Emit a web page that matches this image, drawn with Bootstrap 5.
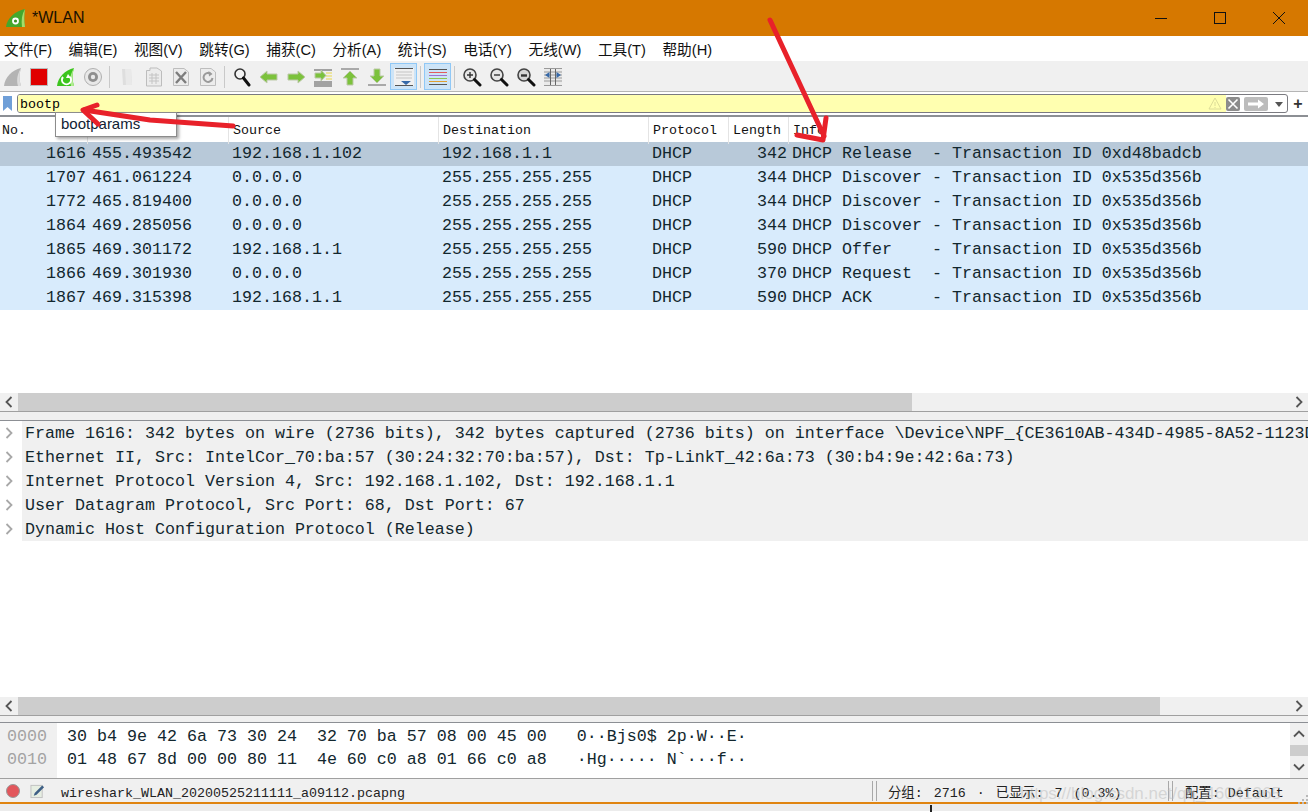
<!DOCTYPE html>
<html lang="zh-CN">
<head>
  <meta charset="UTF-8" />
  <meta name="viewport" content="width=device-width, initial-scale=1.0" />
  <title>*WLAN</title>
  <link href="https://cdn.jsdelivr.net/npm/bootstrap@5.3.3/dist/css/bootstrap.min.css" rel="stylesheet">
  <style>
    body {
      background-color: #fff;
      color: #000;
      height: 812px;
      overflow: hidden;
      font-family: "Liberation Sans", "Noto Sans CJK SC", sans-serif;
    }
    .mono { font-family: "Liberation Mono", "Noto Sans CJK SC", monospace; }
    .titlebar { height: 36px; background-color: #d67800; padding-left: 5px; font-size: 16px; color: #1a1000; }
    .titlebar .win-btns { margin-left: auto; }
    .title-icon { margin-right: 6px; }
    .win-btn { width: 59px; height: 24px; display: flex; align-items: center; justify-content: center; }
    .menubar { height: 26px; padding: 2px 0 0 4px; gap: 16.5px; font-size: 14.67px; color: #111; border-bottom: 1px solid #f0f0f0; }
    .toolstrip { height: 30px; background-color: #f0f0f0; border-bottom: 1px solid #b5b5b5; }
    .tool-btn { width: 27px; height: 27px; display: flex; align-items: center; justify-content: center; flex: none; }
    .tool-btn.first { width: 25px; }
    .tool-btn.on { background-color: #cde4f7; border: 1px solid #90c8f6; }
    .tool-sep { width: 7px; height: 22px; flex: none; position: relative; }
    .tool-sep::after { content: ""; position: absolute; left: 3px; top: 0; bottom: 0; width: 1px; background-color: #c9c9c9; }
    .filterbar { height: 25px; border-bottom: 2px solid #8c8f94; padding: 2px 0 2px 0; }
    .bookmark-box { width: 17px; padding-left: 3px; }
    .filter-input { width: 1271px; height: 19px; border: 1px solid #7a7a80; border-radius: 3px; background-color: #fff; overflow: hidden; }
    .filter-text { background-color: #ffffb0; flex-grow: 1; height: 100%; padding-left: 2px; font-size: 13.33px; line-height: 19px; }
    .filter-add { width: 20px; text-align: center; font-size: 16px; font-weight: 700; line-height: 18px; color: #333; }
    .col-grid { display: grid; grid-template-columns: 88px 141px 210px 210px 80px 60px 1fr; }
    .pkt-head { height: 25px; font-size: 13.33px; line-height: 27px; color: #111; }
    .pkt-head > div { padding-left: 4px; border-right: 1px solid #e4e4e4; }
    .pkt-head > div:first-child { padding-left: 2px; }
    .pkt-list { height: 251px; }
    .pkt-row { height: 24px; font-size: 16.67px; line-height: 23px; background-color: #d8ebfc; color: #12272e; white-space: pre; }
    .pkt-row.sel { background-color: #b8c9d9; }
    .pkt-row > div { padding-left: 3px; }
    .pkt-row > .r { text-align: right; padding-left: 0; padding-right: 2px; }
    .pkt-row > .t { padding-left: 4px; }
    .pkt-row > .info { padding-left: 3px; }
    .hbar { height: 19px; background-color: #f0f0f0; border-bottom: 1px solid #a0a0a0; }
    .hbar-end { width: 18px; flex: none; display: flex; align-items: center; justify-content: center; }
    .hbar-thumb { background-color: #cdcdcd; height: 100%; }
    .thumb-a { width: 894px; }
    .thumb-b { width: 1142px; }
    .splitter { background-color: #f0f0f0; border-bottom: 1px solid #8c8f94; }
    .split-a { height: 9px; }
    .split-b { height: 7px; }
    .detail-pane { height: 276px; font-size: 16.67px; }
    .detail-row { height: 24px; line-height: 26px; white-space: pre; overflow: hidden; }
    .detail-arrow { width: 22px; flex: none; display: flex; align-items: center; padding-left: 5px; }
    .detail-text { background-color: #f0f0f0; flex-grow: 1; padding-left: 3px; color: #12272e; }
    .hex-pane { height: 55px; font-size: 16.67px; line-height: 23px; }
    .hex-gutter { width: 57px; background-color: #f0f0f0; color: #a3a3a3; padding: 2px 0 0 7px; flex: none; }
    .hex-body { padding: 2px 0 0 10px; white-space: pre; color: #12272e; flex-grow: 1; }
    .vbar { width: 18px; background-color: #f0f0f0; flex: none; }
    .vbar-end { height: 22px; display: flex; align-items: center; justify-content: center; }
    .vbar-thumb { height: 11px; background-color: #cdcdcd; }
    .statusbar { height: 26px; background-color: #f0f0f0; border-top: 1px solid #a0a0a0; border-bottom: 2px solid #e08410; font-size: 13.33px; color: #222; position: relative; }
    .status-rec { margin-left: 6px; margin-right: 10px; flex: none; }
    .status-note { margin-right: 16px; flex: none; }
    .status-file { width: 811px; padding-top: 7px; }
    .status-grip { width: 5px; height: 20px; border-left: 1px solid #a8a8a8; border-right: 1px solid #a8a8a8; flex: none; }
    .status-grip-a { margin-right: 11px; }
    .status-count { width: 280px; padding-top: 7px; white-space: nowrap; word-spacing: 3px; }
    .status-grip-b { margin-right: 12px; }
    .status-profile { padding-top: 7px; }
    .under-strip { height: 7px; background-color: #ececec; }
    .popup-tip { position: absolute; left: 55px; top: 112px; width: 122px; height: 25px; background-color: #fff; border: 1px solid #8c8c8c; box-shadow: 2px 2px 3px rgba(0,0,0,.35); font-size: 15px; line-height: 22px; padding-left: 5px; color: #123; }
    .draw-over { position: absolute; left: 0; top: 0; pointer-events: none; }
    .watermark { position: absolute; left: 1020px; top: 781px; font-size: 17px; color: rgba(190,190,190,.55); white-space: nowrap; width: 288px; overflow: hidden; }
    .resize-tick { position: absolute; left: 930px; top: 805px; width: 2px; height: 7px; background-color: #222; }
    .size-grip { position: absolute; left: 1298px; top: 794px; }
  </style>
</head>
<body>

<!-- title bar -->
<div class="titlebar d-flex align-items-center">
  <svg width="21" height="20" viewBox="0 0 21 20" class="title-icon"><path d="M1 19C2 10 10 3 20 1C19 7 19 13 20 19Z" fill="#45a82c"/><path d="M20 1C19 7 19 13 20 19L17 19C16 12 17 6 20 1Z" fill="#a4dc6a"/><circle cx="10.500" cy="13" r="3.400" fill="#fff"/><circle cx="10.500" cy="13" r="1.600" fill="#3c8f26"/></svg>
  <span>*WLAN</span>
  <div class="win-btns d-flex align-items-center">
    <div class="win-btn"><svg width="12" height="12"><path d="M0 6.500H12" stroke="#111"/></svg></div>
    <div class="win-btn"><svg width="12" height="12"><rect x=".5" y=".5" width="11" height="11" fill="none" stroke="#111"/></svg></div>
    <div class="win-btn"><svg width="12" height="12"><path d="M0 0L12 12M12 0L0 12" stroke="#111"/></svg></div>
  </div>
</div>

<!-- menu -->
<div class="menubar d-flex align-items-center">
  <span>文件(F)</span><span>编辑(E)</span><span>视图(V)</span><span>跳转(G)</span><span>捕获(C)</span><span>分析(A)</span><span>统计(S)</span><span>电话(Y)</span><span>无线(W)</span><span>工具(T)</span><span>帮助(H)</span>
</div>

<!-- main toolbar -->
<div class="toolstrip d-flex align-items-center">
  <div class="tool-btn first"><svg width="20" height="20" viewBox="0 0 20 20"><path d="M1 19C2 10 9 3 18 1C16 7 16 13 18 19Z" fill="#b4b4b4"/><path d="M18 1C16 7 16 13 18 19L15 19C13 12 15 6 18 1Z" fill="#dcdcdc"/></svg></div>
  <div class="tool-btn"><svg width="18" height="18"><rect x=".5" y=".5" width="17" height="17" fill="#e00000" stroke="#bbb"/></svg></div>
  <div class="tool-btn"><svg width="20" height="20" viewBox="0 0 20 20"><path d="M1 19C2 10 9 3 18 1C16 7 16 13 18 19Z" fill="#3cc41e"/><path d="M18 1C16 7 16 13 18 19L15 19C13 12 15 6 18 1Z" fill="#b0ec90"/><path d="M7 10A4.500 4.500 0 1 0 14 10" fill="none" stroke="#fff" stroke-width="2"/><path d="M12 7L15 11L10 11Z" fill="#fff"/></svg></div>
  <div class="tool-btn"><svg width="20" height="20" viewBox="0 0 20 20"><circle cx="10" cy="10" r="8.500" fill="#e8e8e8" stroke="#b0b0b0"/><circle cx="10" cy="10" r="5" fill="#8f8f8f"/><circle cx="10" cy="10" r="2.200" fill="#e8e8e8"/></svg></div>
  <div class="tool-sep"></div>
  <div class="tool-btn"><svg width="12" height="18" viewBox="0 0 12 18"><path d="M1 1H10L11 17H2Z" fill="#dedede"/><path d="M4 1H10L11 17H5Z" fill="#e9e9e9"/></svg></div>
  <div class="tool-btn"><svg width="18" height="20" viewBox="0 0 18 20"><path d="M1.500 3.500H5V1H12L16.500 4V19H1.500Z" fill="#ececec" stroke="#bdbdbd"/><path d="M4 8H14M4 11H14M4 14H14M7 6V17M11 6V17" stroke="#c4c4c4"/></svg></div>
  <div class="tool-btn"><svg width="18" height="20" viewBox="0 0 18 20"><path d="M1.500 1.500H12L16.500 5V18.500H1.500Z" fill="#ececec" stroke="#bdbdbd"/><path d="M4 5L14 16M14 5L4 16" stroke="#7d7d7d" stroke-width="2.400"/></svg></div>
  <div class="tool-btn"><svg width="18" height="20" viewBox="0 0 18 20"><path d="M1.500 1.500H12L16.500 5V18.500H1.500Z" fill="#ececec" stroke="#bdbdbd"/><path d="M12 7A4.500 4.500 0 1 0 13.500 11" fill="none" stroke="#9a9a9a" stroke-width="2"/><path d="M9.500 4L13.500 7L10 9.500Z" fill="#9a9a9a"/></svg></div>
  <div class="tool-sep"></div>
  <div class="tool-btn"><svg width="18" height="20" viewBox="0 0 18 20"><circle cx="7" cy="7" r="5" fill="#f4f4f4" stroke="#333" stroke-width="1.600"/><path d="M10.500 11L16 18" stroke="#111" stroke-width="3" stroke-linecap="round"/></svg></div>
  <div class="tool-btn"><svg width="20" height="14" viewBox="0 0 20 14"><path d="M1 7L8 1V4H18V10H8V13Z" fill="#7cc23c" stroke="#bcc9a8"/></svg></div>
  <div class="tool-btn"><svg width="20" height="14" viewBox="0 0 20 14"><path d="M19 7L12 1V4H2V10H12V13Z" fill="#7cc23c" stroke="#bcc9a8"/></svg></div>
  <div class="tool-btn"><svg width="20" height="20" viewBox="0 0 20 20"><path d="M1 3H19M1 15H19M1 17H19M1 19H19" stroke="#555"/><path d="M13 6H19M13 9H19M13 12H19" stroke="#e8d84c"/><path d="M2 6H8V3L13 8.500L8 14V11H2Z" fill="#7cc23c" stroke="#bcc9a8"/></svg></div>
  <div class="tool-btn"><svg width="20" height="20" viewBox="0 0 20 20"><path d="M1 2H19" stroke="#a9a9a9" stroke-width="2"/><path d="M10 4L17 11H13V18H7V11H3Z" fill="#7cc23c" stroke="#bcc9a8"/></svg></div>
  <div class="tool-btn"><svg width="20" height="20" viewBox="0 0 20 20"><path d="M1 18H19" stroke="#a9a9a9" stroke-width="2"/><path d="M10 16L17 9H13V2H7V9H3Z" fill="#7cc23c" stroke="#bcc9a8"/></svg></div>
  <div class="tool-btn on"><svg width="20" height="20" viewBox="0 0 20 20"><rect y="1" width="20" height="18" fill="#f0f0f0"/><path d="M1 1.500H19M1 18.500H19" stroke="#555"/><path d="M2 5H18M2 8H18M2 11H18" stroke="#c4c4c4"/><path d="M7 14H17L12 18Z" fill="#3769a8"/></svg></div>
  <div class="tool-sep"></div>
  <div class="tool-btn on"><svg width="20" height="20" viewBox="0 0 20 20"><path d="M1 2.500H19" stroke="#555"/><path d="M1 5.500H19" stroke="#e25d5d"/><path d="M1 8.500H19" stroke="#a071d0"/><path d="M1 11.500H19" stroke="#8ac750"/><path d="M1 14.500H19" stroke="#e0a030"/><path d="M1 17.500H19" stroke="#555"/></svg></div>
  <div class="tool-sep"></div>
  <div class="tool-btn"><svg width="20" height="20" viewBox="0 0 20 20"><circle cx="8" cy="8" r="6" fill="#e6e6e6" stroke="#444" stroke-width="1.600"/><path d="M5 8H11M8 5V11" stroke="#333" stroke-width="1.400"/><path d="M12.500 12.500L18 18" stroke="#111" stroke-width="3" stroke-linecap="round"/></svg></div>
  <div class="tool-btn"><svg width="20" height="20" viewBox="0 0 20 20"><circle cx="8" cy="8" r="6" fill="#e6e6e6" stroke="#444" stroke-width="1.600"/><path d="M5 8H11" stroke="#333" stroke-width="1.400"/><path d="M12.500 12.500L18 18" stroke="#111" stroke-width="3" stroke-linecap="round"/></svg></div>
  <div class="tool-btn"><svg width="20" height="20" viewBox="0 0 20 20"><circle cx="8" cy="8" r="6" fill="#d6d6d6" stroke="#444" stroke-width="1.600"/><path d="M5 8.500H11" stroke="#333" stroke-width="2.400"/><path d="M12.500 12.500L18 18" stroke="#111" stroke-width="3" stroke-linecap="round"/></svg></div>
  <div class="tool-btn"><svg width="20" height="20" viewBox="0 0 20 20"><rect x="1" y="2" width="18" height="16" fill="#eaeaea"/><path d="M1 1.500H19M1 5H19M1 18.500H19M1 8H19M1 11H19M1 14H19" stroke="#9a9a9a"/><path d="M7.500 2V18M12.500 2V18" stroke="#666"/><path d="M2 8L6.500 5V11ZM18 8L13.500 5V11Z" fill="#3769a8"/></svg></div>
</div>

<!-- display filter -->
<div class="filterbar d-flex align-items-center">
  <div class="bookmark-box d-flex"><svg width="9" height="15"><path d="M0 0H9V15L4.500 11L0 15Z" fill="#6f9fd8"/></svg></div>
  <div class="filter-input d-flex align-items-center">
    <div class="filter-text mono d-flex justify-content-between">
      <span>bootp</span>
      <svg width="14" height="13" viewBox="0 0 14 13" class="align-self-center me-1"><path d="M7 1L13 12H1Z" fill="none" stroke="#dcdc98"/><path d="M7 5V9M7 10V11" stroke="#dcdc98"/></svg>
    </div>
    <svg width="14" height="14" viewBox="0 0 14 14"><rect width="14" height="14" rx="2" fill="#8c8c8c"/><path d="M2.500 2.500L11.500 11.500M11.500 2.500L2.500 11.500" stroke="#fff" stroke-width="1.600"/></svg>
    <svg width="24" height="14" viewBox="0 0 24 14" class="ms-1"><rect width="24" height="14" rx="2" fill="#bcbcbc"/><path d="M4 5.500H14V2.500L20 7L14 11.500V8.500H4Z" fill="#fff"/></svg>
    <svg width="19" height="14" viewBox="0 0 19 14"><path d="M7 5H15L11 10Z" fill="#555"/></svg>
  </div>
  <div class="filter-add">+</div>
</div>

<!-- packet list -->
<div class="pkt-head col-grid mono">
  <div>No.</div><div>&nbsp;</div><div>Source</div><div>Destination</div><div>Protocol</div><div>Length</div><div class="border-0">Info</div>
</div>
<div class="pkt-list mono">
  <div class="pkt-row sel col-grid"><div class="r">1616</div><div class="t">455.493542</div><div>192.168.1.102</div><div>192.168.1.1</div><div>DHCP</div><div class="r">342</div><div class="info">DHCP Release  - Transaction ID 0xd48badcb</div></div>
  <div class="pkt-row col-grid"><div class="r">1707</div><div class="t">461.061224</div><div>0.0.0.0</div><div>255.255.255.255</div><div>DHCP</div><div class="r">344</div><div class="info">DHCP Discover - Transaction ID 0x535d356b</div></div>
  <div class="pkt-row col-grid"><div class="r">1772</div><div class="t">465.819400</div><div>0.0.0.0</div><div>255.255.255.255</div><div>DHCP</div><div class="r">344</div><div class="info">DHCP Discover - Transaction ID 0x535d356b</div></div>
  <div class="pkt-row col-grid"><div class="r">1864</div><div class="t">469.285056</div><div>0.0.0.0</div><div>255.255.255.255</div><div>DHCP</div><div class="r">344</div><div class="info">DHCP Discover - Transaction ID 0x535d356b</div></div>
  <div class="pkt-row col-grid"><div class="r">1865</div><div class="t">469.301172</div><div>192.168.1.1</div><div>255.255.255.255</div><div>DHCP</div><div class="r">590</div><div class="info">DHCP Offer    - Transaction ID 0x535d356b</div></div>
  <div class="pkt-row col-grid"><div class="r">1866</div><div class="t">469.301930</div><div>0.0.0.0</div><div>255.255.255.255</div><div>DHCP</div><div class="r">370</div><div class="info">DHCP Request  - Transaction ID 0x535d356b</div></div>
  <div class="pkt-row col-grid"><div class="r">1867</div><div class="t">469.315398</div><div>192.168.1.1</div><div>255.255.255.255</div><div>DHCP</div><div class="r">590</div><div class="info">DHCP ACK      - Transaction ID 0x535d356b</div></div>
</div>
<div class="hbar d-flex">
  <div class="hbar-end"><svg width="8" height="12"><path d="M6.500 1L1.500 6L6.500 11" fill="none" stroke="#555" stroke-width="1.800"/></svg></div>
  <div class="hbar-thumb thumb-a"></div>
  <div class="hbar-end ms-auto"><svg width="8" height="12"><path d="M1.500 1L6.500 6L1.500 11" fill="none" stroke="#555" stroke-width="1.800"/></svg></div>
</div>
<div class="splitter split-a"></div>

<!-- packet details -->
<div class="detail-pane mono">
  <div class="detail-row d-flex"><div class="detail-arrow"><svg width="8" height="12"><path d="M1.500 1L6.500 6L1.500 11" fill="none" stroke="#a8a8a8" stroke-width="1.800"/></svg></div><div class="detail-text">Frame 1616: 342 bytes on wire (2736 bits), 342 bytes captured (2736 bits) on interface \Device\NPF_{CE3610AB-434D-4985-8A52-1123D</div></div>
  <div class="detail-row d-flex"><div class="detail-arrow"><svg width="8" height="12"><path d="M1.500 1L6.500 6L1.500 11" fill="none" stroke="#a8a8a8" stroke-width="1.800"/></svg></div><div class="detail-text">Ethernet II, Src: IntelCor_70:ba:57 (30:24:32:70:ba:57), Dst: Tp-LinkT_42:6a:73 (30:b4:9e:42:6a:73)</div></div>
  <div class="detail-row d-flex"><div class="detail-arrow"><svg width="8" height="12"><path d="M1.500 1L6.500 6L1.500 11" fill="none" stroke="#a8a8a8" stroke-width="1.800"/></svg></div><div class="detail-text">Internet Protocol Version 4, Src: 192.168.1.102, Dst: 192.168.1.1</div></div>
  <div class="detail-row d-flex"><div class="detail-arrow"><svg width="8" height="12"><path d="M1.500 1L6.500 6L1.500 11" fill="none" stroke="#a8a8a8" stroke-width="1.800"/></svg></div><div class="detail-text">User Datagram Protocol, Src Port: 68, Dst Port: 67</div></div>
  <div class="detail-row d-flex"><div class="detail-arrow"><svg width="8" height="12"><path d="M1.500 1L6.500 6L1.500 11" fill="none" stroke="#a8a8a8" stroke-width="1.800"/></svg></div><div class="detail-text">Dynamic Host Configuration Protocol (Release)</div></div>
</div>
<div class="hbar d-flex">
  <div class="hbar-end"><svg width="8" height="12"><path d="M6.500 1L1.500 6L6.500 11" fill="none" stroke="#555" stroke-width="1.800"/></svg></div>
  <div class="hbar-thumb thumb-b"></div>
  <div class="hbar-end ms-auto"><svg width="8" height="12"><path d="M1.500 1L6.500 6L1.500 11" fill="none" stroke="#555" stroke-width="1.800"/></svg></div>
</div>
<div class="splitter split-b"></div>

<!-- packet bytes -->
<div class="hex-pane d-flex mono">
  <div class="hex-gutter">0000<br>0010</div>
  <div class="hex-body">30 b4 9e 42 6a 73 30 24  32 70 ba 57 08 00 45 00   0··Bjs0$ 2p·W··E·
01 48 67 8d 00 00 80 11  4e 60 c0 a8 01 66 c0 a8   ·Hg····· N`···f··</div>
  <div class="vbar">
    <div class="vbar-end"><svg width="12" height="8"><path d="M1 6.500L6 1.500L11 6.500" fill="none" stroke="#555" stroke-width="1.800"/></svg></div>
    <div class="vbar-thumb"></div>
    <div class="vbar-end"><svg width="12" height="8"><path d="M1 1.500L6 6.500L11 1.500" fill="none" stroke="#555" stroke-width="1.800"/></svg></div>
  </div>
</div>

<!-- status bar -->
<div class="statusbar d-flex align-items-center mono">
  <svg width="14" height="14" class="status-rec"><circle cx="7" cy="7" r="6.500" fill="#e2575c" stroke="#999"/></svg>
  <svg width="15" height="16" viewBox="0 0 16 16" class="status-note"><rect x="1" y="2" width="12" height="13" fill="#e6eee2" stroke="#c0c0c0"/><path d="M5 10L13 2L15 4L7 12L4 13Z" fill="#3d5f85"/></svg>
  <span class="status-file">wireshark_WLAN_20200525211111_a09112.pcapng</span>
  <div class="status-grip status-grip-a"></div>
  <span class="status-count">分组: 2716 · 已显示: 7 (0.3%)</span>
  <div class="status-grip status-grip-b"></div>
  <span class="status-profile">配置: Default</span>
</div>
<div class="under-strip"></div>

<!-- things lying over the panes -->
<div class="popup-tip">bootparams</div>
<div class="watermark">https://blog.csdn.net/qq_46041365</div>
<div class="resize-tick"></div>
<svg class="size-grip" width="10" height="10"><path d="M8 1h2v2H8zM4 5h2v2H4zM8 5h2v2H8zM0 8h2v2H0zM4 8h2v2H4zM8 8h2v2H8z" fill="#b8b8b8"/></svg>
<svg class="draw-over" width="1308" height="812" viewBox="0 0 1308 812" fill="none" stroke="#e8212a" stroke-linecap="round" stroke-linejoin="round">
  <path d="M233 126L150 120L84 110" stroke-width="5"/>
  <path d="M97 105L83 110L98 124" stroke-width="5"/>
  <path d="M770 20L824 136" stroke-width="5"/>
  <path d="M797 135L823 140L826 118" stroke-width="5"/>
</svg>

<script src="https://cdn.jsdelivr.net/npm/bootstrap@5.3.3/dist/js/bootstrap.bundle.min.js"></script>
</body>
</html>
